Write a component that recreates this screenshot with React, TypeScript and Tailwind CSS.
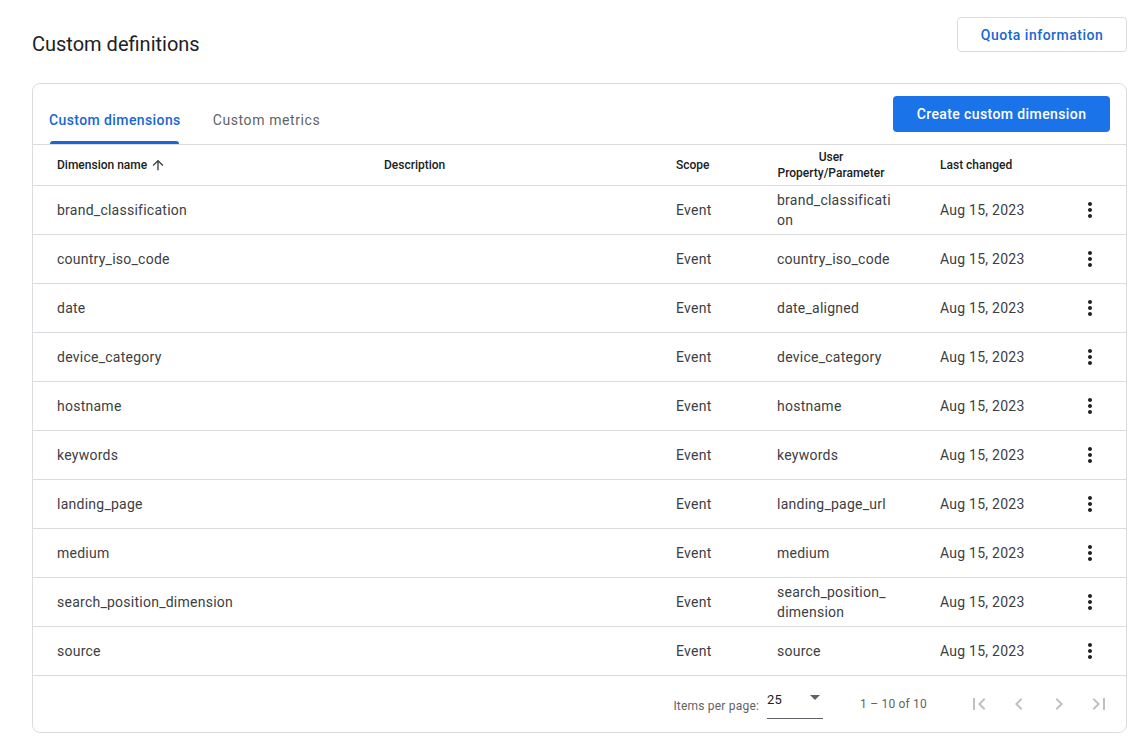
import React from "react";

const rows = [
  { name: "brand_classification", param: "brand_classification" },
  { name: "country_iso_code", param: "country_iso_code" },
  { name: "date", param: "date_aligned" },
  { name: "device_category", param: "device_category" },
  { name: "hostname", param: "hostname" },
  { name: "keywords", param: "keywords" },
  { name: "landing_page", param: "landing_page_url" },
  { name: "medium", param: "medium" },
  { name: "search_position_dimension", param: "search_position_dimension" },
  { name: "source", param: "source" },
];

const cols = "grid grid-cols-[327px_292px_101px_163px_144px_1fr]";

function Icon({ d, className }: { d: string; className?: string }) {
  return (
    <svg viewBox="0 0 24 24" className={className} fill="currentColor">
      <path d={d} />
    </svg>
  );
}

export default function App() {
  return (
    <main className="min-h-screen bg-white font-['Roboto',sans-serif] text-[#3c4043]">
      <div className="pl-8 pr-[13px] pt-[17px]">
        <div className="flex items-start justify-between">
          <h1 className="mt-[13px] text-[20px] leading-7 text-[#202124]">Custom definitions</h1>
          <button className="h-[35px] w-[170px] rounded border border-[#dadce0] text-sm font-medium tracking-[0.5px] text-[#1967d2]">
            Quota information
          </button>
        </div>

        <section className="mt-[25px] overflow-hidden rounded-lg border border-[#dadce0]">
          <div className="flex h-[61px] items-stretch border-b border-[#dadce0] pr-4">
            <div className="relative flex items-center px-4 pt-[12px] text-sm font-medium tracking-[0.4px] text-[#1967d2]">
              Custom dimensions
              <span className="absolute bottom-0 left-[17px] right-[18px] h-[3px] rounded-t bg-[#1967d2]" />
            </div>
            <div className="flex items-center px-4 pt-[12px] text-sm tracking-[0.6px] text-[#5f6368]">Custom metrics</div>
            <div className="ml-auto flex items-center">
              <button className="h-[36px] w-[217px] rounded bg-[#1a73e8] text-sm font-medium tracking-[0.4px] text-white">
                Create custom dimension
              </button>
            </div>
          </div>

          <div className={`${cols} h-[41px] items-center border-b border-[#dadce0] text-xs font-medium text-[#202124]`}>
            <div className="flex items-center pl-6">
              Dimension name
              <Icon className="ml-[3px] h-4 w-4 text-[#3c4043]" d="M4 12l1.41 1.41L11 7.83V20h2V7.83l5.58 5.59L20 12l-8-8-8 8z" />
            </div>
            <div className="pl-6">Description</div>
            <div className="pl-6">Scope</div>
            <div className="ml-6 w-[108px] text-center leading-4">User Property/Parameter</div>
            <div className="pl-6">Last changed</div>
            <div />
          </div>

          {rows.map((r) => (
            <div key={r.name} className={`${cols} h-[49px] items-center border-b border-[#dadce0] text-sm leading-5 tracking-[0.25px]`}>
              <div className="pl-6">{r.name}</div>
              <div className="pl-6" />
              <div className="pl-6">Event</div>
              <div className="ml-6 w-[115px] break-all">{r.param}</div>
              <div className="pl-6">Aug 15, 2023</div>
              <div className="pl-[18px]">
                <Icon
                  className="h-6 w-6 text-[#202124]"
                  d="M12 8c1.1 0 2-.9 2-2s-.9-2-2-2-2 .9-2 2 .9 2 2 2zm0 2c-1.1 0-2 .9-2 2s.9 2 2 2 2-.9 2-2-.9-2-2-2zm0 6c-1.1 0-2 .9-2 2s.9 2 2 2 2-.9 2-2-.9-2-2-2z"
                />
              </div>
            </div>
          ))}

          <div className="flex h-[56px] items-center justify-end pr-[7px] text-xs tracking-[0.2px] text-[#5f6368]">
            <span className="mt-[3px]">Items per page:</span>
            <div className="relative ml-2 flex h-[30px] w-[56px] items-start border-b border-[#5f6368] pt-[2px] text-[13px] text-[#202124]">
              25
              <span className="absolute right-[3px] top-[6px] h-0 w-0 border-x-[5px] border-t-[5px] border-x-transparent border-t-[#5f6368]" />
            </div>
            <span className="ml-[37px] mr-[32px]">1 – 10 of 10</span>
            {[
              "M18.41 16.59L13.82 12l4.59-4.59L17 6l-6 6 6 6zM6 6h2v12H6z",
              "M15.41 7.41L14 6l-6 6 6 6 1.41-1.41L10.83 12z",
              "M10 6L8.59 7.41 13.17 12l-4.58 4.59L10 18l6-6z",
              "M5.59 7.41L10.18 12l-4.59 4.59L7 18l6-6-6-6zM16 6h2v12h-2z",
            ].map((d) => (
              <div key={d} className="flex h-10 w-10 items-center justify-center">
                <Icon className="h-6 w-6 text-[#bdc1c6]" d={d} />
              </div>
            ))}
          </div>
        </section>
      </div>
    </main>
  );
}
